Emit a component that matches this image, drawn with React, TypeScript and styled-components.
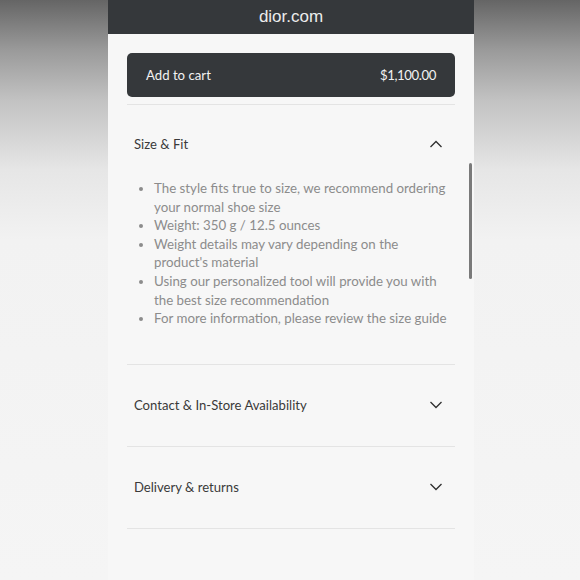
import React from "react";
import styled, { createGlobalStyle } from "styled-components";

const GlobalStyle = createGlobalStyle`
  html, body {
    margin: 0;
    padding: 0;
  }
  body {
    width: 580px;
    height: 580px;
    overflow: hidden;
    font-family: Lato, "Noto Sans", sans-serif;
  }
`;

const Backdrop = styled.div`
  width: 580px;
  height: 580px;
  display: flex;
  justify-content: center;
  background: linear-gradient(
    to bottom,
    #656565 0px,
    #9a9a9a 50px,
    #c2c2c2 100px,
    #e6e6e6 170px,
    #f2f2f2 240px,
    #f5f5f5 580px
  );
`;

const Phone = styled.div`
  position: relative;
  width: 366px;
  height: 580px;
  margin-left: 2px;
  background: #f7f7f7;
  display: flex;
  flex-direction: column;
`;

const UrlBar = styled.div`
  height: 34px;
  flex: none;
  background: #35383b;
  color: #ececec;
  font-family: "Liberation Sans", Arial, sans-serif;
  font-size: 17px;
  display: flex;
  align-items: center;
  justify-content: center;
`;

const Content = styled.div`
  padding: 0 19px;
  display: flex;
  flex-direction: column;
`;

const CartArea = styled.div`
  padding: 19px 0 7px;
  border-bottom: 1px solid #e4e4e4;
`;

const CartButton = styled.button`
  width: 100%;
  height: 44px;
  border: none;
  border-radius: 5px;
  background: #35383b;
  color: #f2f2f2;
  font-family: inherit;
  font-size: 13.2px;
  padding: 0 19px;
  display: flex;
  align-items: center;
  justify-content: space-between;
`;

const Price = styled.span`
  letter-spacing: -0.4px;
`;

const Section = styled.section<{ $open?: boolean }>`
  border-bottom: 1px solid #e4e4e4;
  padding-bottom: ${(p) => (p.$open ? "36px" : "0")};
`;

const Header = styled.div<{ $open?: boolean }>`
  display: flex;
  align-items: center;
  justify-content: space-between;
  padding: ${(p) => (p.$open ? "29px 12px 0 7px" : "30px 12px 31px 7px")};
  line-height: 20px;
  font-size: 13.1px;
  color: #3a3a3a;
`;

const List = styled.ul`
  margin: 25px 0 0;
  padding: 0 6px 0 27px;
  list-style: disc;
  color: #8c8c8c;
  font-size: 13.3px;
  line-height: 18.6px;
`;

const Chevron = ({ up }: { up?: boolean }) => (
  <svg width="14" height="8" viewBox="0 0 14 8">
    <polyline
      points={up ? "1.5,7 7,1.5 12.5,7" : "1.5,1 7,6.5 12.5,1"}
      fill="none"
      stroke="#2f2f2f"
      strokeWidth="1.3"
    />
  </svg>
);

const ScrollThumb = styled.div`
  position: absolute;
  left: 361px;
  top: 163px;
  width: 3px;
  height: 116px;
  border-radius: 2px;
  background: #7a7a7a;
`;

const bullets = [
  "The style fits true to size, we recommend ordering your normal shoe size",
  "Weight: 350 g / 12.5 ounces",
  "Weight details may vary depending on the product's material",
  "Using our personalized tool will provide you with the best size recommendation",
  "For more information, please review the size guide",
];

export default function App() {
  return (
    <>
      <GlobalStyle />
      <Backdrop>
        <Phone>
          <UrlBar>dior.com</UrlBar>
          <Content>
            <CartArea>
              <CartButton>
                <span>Add to cart</span>
                <Price>$1,100.00</Price>
              </CartButton>
            </CartArea>
            <Section $open>
              <Header $open>
                <span>Size &amp; Fit</span>
                <Chevron up />
              </Header>
              <List>
                {bullets.map((b) => (
                  <li key={b}>{b}</li>
                ))}
              </List>
            </Section>
            <Section>
              <Header>
                <span>Contact &amp; In-Store Availability</span>
                <Chevron />
              </Header>
            </Section>
            <Section>
              <Header>
                <span>Delivery &amp; returns</span>
                <Chevron />
              </Header>
            </Section>
          </Content>
          <ScrollThumb />
        </Phone>
      </Backdrop>
    </>
  );
}
